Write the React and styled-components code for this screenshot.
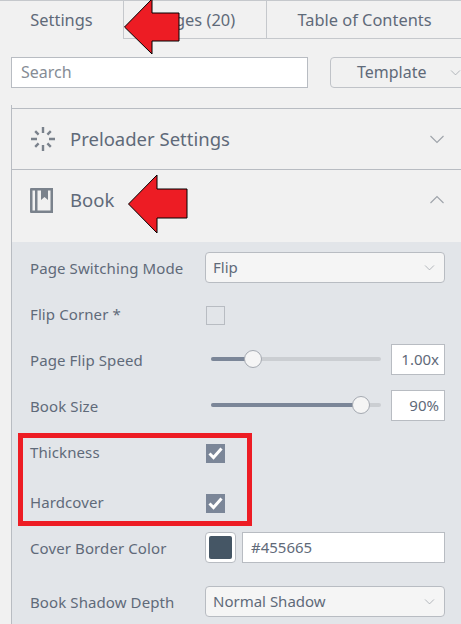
import React from "react";
import styled, { createGlobalStyle } from "styled-components";

const Global = createGlobalStyle`
  html, body { margin: 0; padding: 0; }
  body { background: #f1f1f1; width: 461px; height: 624px; overflow: hidden; }
  * { box-sizing: border-box; }
`;

const Page = styled.div`
  position: relative;
  width: 461px;
  height: 624px;
  overflow: hidden;
  background: #f1f1f1;
  color: #5f6a79;
  font-family: "Noto Sans", "Open Sans", sans-serif;
`;

const Tabs = styled.div`
  display: flex;
  height: 39px;
  border-top: 1px solid #c5c8cc;
`;

const Tab = styled.div`
  width: ${(p) => p.$w}px;
  flex: none;
  display: flex;
  align-items: center;
  justify-content: center;
  padding: 0 0 1px ${(p) => (p.$first ? 0 : 1)}px;
  font-size: 16.4px;
  border-left: ${(p) => (p.$first ? "none" : "1px solid #c5c8cc")};
  border-bottom: ${(p) => (p.$active ? "none" : "1px solid #c5c8cc")};
`;

const Toolbar = styled.div`
  display: flex;
  gap: 22px;
  padding: 18px 0 0 11px;
  width: 520px;
`;

const Search = styled.div`
  width: 297px;
  height: 31px;
  background: #fff;
  border: 1px solid #b8bcc2;
  display: flex;
  align-items: center;
  padding: 0 0 1px 9px;
  font-size: 16px;
  color: #868c95;
`;

const TemplateButton = styled.div`
  width: 160px;
  height: 31px;
  border: 1px solid #c0c3c8;
  border-radius: 4px;
  display: flex;
  align-items: center;
  padding: 0 0 1px 26px;
  font-size: 16px;
  gap: 23px;
`;

const Panel = styled.div`
  margin: 17px 0 0 11px;
  border-left: 1px solid #b8bcc2;
  height: 520px;
  padding-top: 3px;
`;

const Section = styled.div`
  height: ${(p) => p.$h}px;
  border-top: 1px solid #b8bcc2;
  display: flex;
  align-items: center;
  padding: 0 16px ${(p) => p.$lift || 0}px 18px;
  font-size: 18.5px;
  gap: ${(p) => p.$gap}px;
`;

const SectionTitle = styled.div`
  flex: 1;
  padding-bottom: 1px;
`;

const Body = styled.div`
  background: #e2e5e9;
  height: 390px;
  padding: 10px 16px 0 18px;
`;

const Row = styled.div`
  display: flex;
  align-items: center;
  height: 30px;
  margin-top: ${(p) => p.$gap || 0}px;
`;

const Label = styled.div`
  width: 175px;
  flex: none;
  font-size: 15px;
  letter-spacing: 0.1px;
  white-space: nowrap;
  padding-top: ${(p) => (p.$high ? 0 : 2)}px;
  padding-bottom: ${(p) => (p.$high ? 2 : 0)}px;
`;

const Select = styled.div`
  flex: 1;
  height: 31px;
  background: #f5f5f5;
  border: 1px solid #b8bcc2;
  border-radius: 4px;
  display: flex;
  align-items: center;
  justify-content: space-between;
  padding: 0 9px 0 7px;
  font-size: 15px;
`;

const Check = styled.div`
  width: 19px;
  height: 19px;
  margin-left: 1px;
  display: flex;
  align-items: center;
  justify-content: center;
  background: ${(p) => (p.$on ? "#7b8698" : "transparent")};
  border: 1px solid ${(p) => (p.$on ? "#7b8698" : "#b8bcc2")};
`;

const Track = styled.div`
  position: relative;
  width: 170px;
  height: 4px;
  margin-left: 6px;
  margin-right: 10px;
  background: #cbced2;
  border-radius: 2px;
`;

const TrackFill = styled.div`
  height: 100%;
  background: #7b8698;
  border-radius: 2px;
`;

const Thumb = styled.div`
  position: absolute;
  top: -7px;
  width: 18px;
  height: 18px;
  margin-left: -9px;
  border-radius: 50%;
  background: #f5f5f5;
  border: 1px solid #a4a9b1;
`;

const NumberBox = styled.div`
  width: 54px;
  height: 31px;
  background: #fff;
  border: 1px solid #b8bcc2;
  display: flex;
  align-items: center;
  justify-content: flex-end;
  padding-right: 5px;
  font-size: 15px;
`;

const Swatch = styled.div`
  width: 31px;
  height: 31px;
  flex: none;
  padding: 3px;
  background: #fff;
  border: 1px solid #b8bcc2;
  border-radius: 4px;
`;

const SwatchColor = styled.div`
  width: 100%;
  height: 100%;
  background: #455665;
  border-radius: 2px;
`;

const ColorInput = styled.div`
  flex: 1;
  height: 31px;
  margin-left: 6px;
  background: #fff;
  border: 1px solid #b8bcc2;
  display: flex;
  align-items: center;
  padding-left: 8px;
  font-size: 15px;
`;

const RedBox = styled.div`
  position: absolute;
  left: 18px;
  top: 433px;
  width: 234px;
  height: 93px;
  border: 5px solid #ed1c24;
`;

const Arrow = styled.svg`
  position: absolute;
  left: ${(p) => p.$x}px;
  top: ${(p) => p.$y}px;
`;

const Chevron = ({ up, size = 16, color = "#9ea3aa" }) => (
  <svg width={size} height={size} viewBox="0 0 16 16" fill="none" stroke={color} strokeWidth="1.1">
    <path d={up ? "M1.5 11 L8 4.5 L14.5 11" : "M1.5 5 L8 11.5 L14.5 5"} />
  </svg>
);

const SpinnerIcon = () => (
  <svg width="26" height="26" viewBox="0 0 26 26" stroke="#7a828c" strokeWidth="2.4" fill="none">
    <path d="M13 1 V7 M13 19 V25 M1 13 H7 M19 13 H25 M5.2 5.2 L8.6 8.6 M17.4 17.4 L20.8 20.8 M5.2 20.8 L8.6 17.4 M17.4 8.6 L20.8 5.2" />
  </svg>
);

const BookIcon = () => (
  <svg width="23" height="25" viewBox="0 0 23 25" fill="#7a828c">
    <path fillRule="evenodd" d="M1 0 H23 V25 H1 Q0 25 0 24 V1 Q0 0 1 0 Z M2.5 2.5 V22.5 H5 V2.5 Z M7.5 2.5 V22.5 H20.5 V2.5 H18 V12 L14.5 9 L11 12 V2.5 Z" />
  </svg>
);

const Tick = () => (
  <svg width="15" height="13" viewBox="0 0 15 13" fill="none" stroke="#fff" strokeWidth="3">
    <path d="M1.5 6.5 L5.5 10.5 L13.5 1.5" />
  </svg>
);

const RedArrow = ({ x, y, w, h, points }) => (
  <Arrow $x={x} $y={y} width={w} height={h} viewBox={`0 0 ${w} ${h}`}>
    <polygon points={points} fill="#ed1c24" stroke="#000" strokeWidth="1" />
  </Arrow>
);

export default function App() {
  return (
    <Page>
      <Global />
      <Tabs>
        <Tab $w={123} $first $active>Settings</Tab>
        <Tab $w={143}>Pages (20)</Tab>
        <Tab $w={195}>Table of Contents</Tab>
      </Tabs>
      <Toolbar>
        <Search>Search</Search>
        <TemplateButton>
          Template
          <Chevron size={11} />
        </TemplateButton>
      </Toolbar>
      <Panel>
        <Section $h={61} $gap={14}>
          <SpinnerIcon />
          <SectionTitle>Preloader Settings</SectionTitle>
          <Chevron />
        </Section>
        <Section $h={73} $gap={17} $lift={12}>
          <BookIcon />
          <SectionTitle>Book</SectionTitle>
          <Chevron up />
        </Section>
        <Body>
          <Row>
            <Label>Page Switching Mode</Label>
            <Select>Flip<Chevron size={11} /></Select>
          </Row>
          <Row $gap={18}>
            <Label $high>Flip Corner *</Label>
            <Check />
          </Row>
          <Row $gap={14}>
            <Label>Page Flip Speed</Label>
            <Track>
              <TrackFill style={{ width: "24.5%" }} />
              <Thumb style={{ left: "24.5%" }} />
            </Track>
            <NumberBox>1.00x</NumberBox>
          </Row>
          <Row $gap={16}>
            <Label>Book Size</Label>
            <Track>
              <TrackFill style={{ width: "88%" }} />
              <Thumb style={{ left: "88%" }} />
            </Track>
            <NumberBox>90%</NumberBox>
          </Row>
          <Row $gap={18}>
            <Label $high>Thickness</Label>
            <Check $on><Tick /></Check>
          </Row>
          <Row $gap={20}>
            <Label $high>Hardcover</Label>
            <Check $on><Tick /></Check>
          </Row>
          <Row $gap={14}>
            <Label>Cover Border Color</Label>
            <Swatch><SwatchColor /></Swatch>
            <ColorInput>#455665</ColorInput>
          </Row>
          <Row $gap={24}>
            <Label>Book Shadow Depth</Label>
            <Select>Normal Shadow<Chevron size={11} /></Select>
          </Row>
        </Body>
      </Panel>
      <RedBox />
      <RedArrow x={120} y={-4} w={64} h={62} points="4.5,31 32,3 32,17 59,17 59,45 32,45 32,58" />
      <RedArrow x={124} y={171} w={68} h={66} points="4.5,33 33,4 33,18 63,18 63,47 33,47 33,62" />
    </Page>
  );
}
